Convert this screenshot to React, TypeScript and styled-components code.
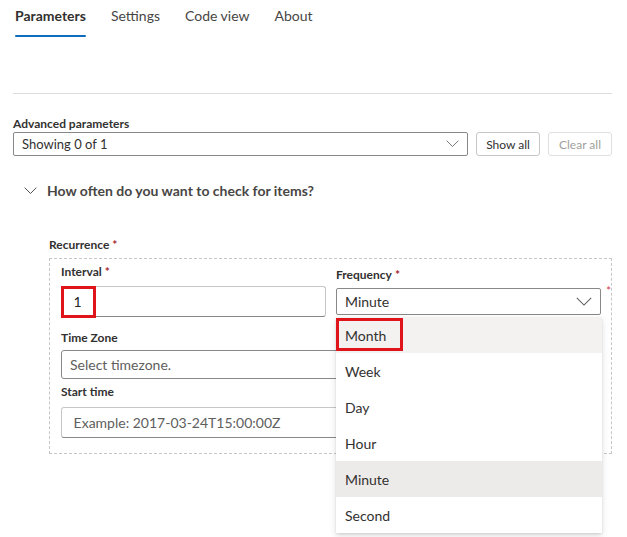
import React from "react";
import styled, { createGlobalStyle } from "styled-components";

const GlobalStyle = createGlobalStyle`
  html, body { margin: 0; padding: 0; background: #fff; }
  body { font-family: "Segoe UI", Lato, "Open Sans", sans-serif; color: #323130; }
  * { box-sizing: border-box; }
`;

const Page = styled.div`
  width: 627px;
  height: 537px;
  padding: 0 15px 0 13px;
  position: relative;
  overflow: hidden;
`;

const TabBar = styled.div`
  display: flex;
  gap: 25px;
  padding-left: 2px;
  height: 40px;
`;

const Tab = styled.div<{ $active?: boolean }>`
  position: relative;
  font-size: 14px;
  line-height: 20px;
  padding-top: 6px;
  font-weight: ${(p) => (p.$active ? 700 : 400)};
  color: ${(p) => (p.$active ? "#323130" : "#484644")};
  &::after {
    content: "";
    display: ${(p) => (p.$active ? "block" : "none")};
    position: absolute;
    left: 0;
    right: 0;
    top: 35px;
    height: 2px;
    border-radius: 1px;
    background: #0f6cbd;
  }
`;

const Divider = styled.div`
  margin-top: 53px;
  height: 1px;
  background: #dcdcdc;
`;

const FieldLabel = styled.div`
  font-size: 12px;
  font-weight: 700;
  line-height: 16px;
  height: 16px;
  color: #323130;
`;

const Star = styled.span`
  color: #a4262c;
  margin-left: 3px;
`;

const AdvLabel = styled(FieldLabel)`
  margin-top: 22px;
`;

const AdvRow = styled.div`
  display: flex;
  align-items: center;
  margin-top: 0px;
  gap: 8px;
`;

const AdvSelect = styled.div`
  flex: 0 0 455px;
  height: 24px;
  border: 1px solid #8a8886;
  border-radius: 2px;
  display: flex;
  align-items: center;
  justify-content: space-between;
  padding: 0 8px 0 8px;
  font-size: 13px;
  color: #323130;
`;

const SmallButton = styled.div<{ $disabled?: boolean }>`
  height: 24px;
  min-width: 64px;
  padding: 0 8px;
  border: 1px solid ${(p) => (p.$disabled ? "#e1dfdd" : "#c8c6c4")};
  border-radius: 3px;
  font-size: 12px;
  white-space: nowrap;
  display: flex;
  align-items: center;
  justify-content: center;
  color: ${(p) => (p.$disabled ? "#a19f9d" : "#323130")};
`;

const SectionHeader = styled.div`
  display: flex;
  align-items: center;
  gap: 10px;
  margin-top: 25px;
  padding-left: 11px;
  font-size: 14px;
  font-weight: 700;
  line-height: 20px;
  color: #484644;
  height: 20px;
`;

const RecurrenceLabel = styled(FieldLabel)`
  margin-top: 36px;
  margin-left: 36px;
`;

const DashedBox = styled.div`
  margin-top: 5px;
  margin-left: 36px;
  width: 563px;
  height: 196px;
  border: 1px dashed #c8c6c4;
  padding: 5px 0 0 11px;
  position: relative;
`;

const TopRow = styled.div`
  display: flex;
  gap: 10px;
`;

const Column = styled.div<{ $offset?: number }>`
  width: 265px;
  padding-top: ${(p) => p.$offset ?? 0}px;
  position: relative;
`;

const Input = styled.div<{ $h: number; $mt: number; $border: string; $placeholder?: boolean }>`
  height: ${(p) => p.$h}px;
  margin-top: ${(p) => p.$mt}px;
  border: 1px solid ${(p) => p.$border};
  border-bottom-color: #8a8886;
  border-radius: 3px;
  display: flex;
  align-items: center;
  padding: 0 12px 0 8px;
  font-size: 14px;
  color: ${(p) => (p.$placeholder ? "#605e5c" : "#242424")};
  position: relative;
`;

const SelectBox = styled.div`
  height: 27px;
  margin-top: 5px;
  border: 1px solid #8a8886;
  border-radius: 2px;
  display: flex;
  align-items: center;
  justify-content: space-between;
  padding: 0 8px 0 8px;
  font-size: 14px;
  color: #323130;
`;

const SideStar = styled.span`
  position: absolute;
  right: -10px;
  top: 20px;
  color: #d13438;
  font-size: 11px;
`;

const FullInput = styled(Input)`
  width: 541px;
`;

const LabelSpaced = styled(FieldLabel)<{ $mt: number }>`
  margin-top: ${(p) => p.$mt}px;
`;

const Highlight = styled.div<{ $w: number; $h: number; $l: number; $t: number }>`
  position: absolute;
  left: ${(p) => p.$l}px;
  top: ${(p) => p.$t}px;
  width: ${(p) => p.$w}px;
  height: ${(p) => p.$h}px;
  border: 3px solid #e0141b;
  pointer-events: none;
`;

const Menu = styled.div`
  position: absolute;
  left: 0;
  top: 53px;
  width: 266px;
  background: #fff;
  box-shadow: 0 3px 7px rgba(0, 0, 0, 0.13), 0 0.6px 2px rgba(0, 0, 0, 0.1);
  z-index: 10;
`;

const MenuItem = styled.div<{ $bg?: string }>`
  height: 36px;
  display: flex;
  align-items: center;
  padding-left: 9px;
  font-size: 14px;
  color: #323130;
  background: ${(p) => p.$bg ?? "#fff"};
  position: relative;
`;

const Chevron = ({ size = 12, color = "#605e5c" }: { size?: number; color?: string }) => (
  <svg width={size} height={size * 0.55} viewBox="0 0 20 11" fill="none">
    <path d="M1 1 L10 10 L19 1" stroke={color} strokeWidth="1.3" />
  </svg>
);

const items = [
  { t: "Month", bg: "#f3f2f1", box: true },
  { t: "Week" },
  { t: "Day" },
  { t: "Hour" },
  { t: "Minute", bg: "#edebe9" },
  { t: "Second" },
];

export default function App() {
  return (
    <Page>
      <GlobalStyle />
      <TabBar>
        <Tab $active>Parameters</Tab>
        <Tab>Settings</Tab>
        <Tab>Code view</Tab>
        <Tab>About</Tab>
      </TabBar>
      <Divider />
      <AdvLabel>Advanced parameters</AdvLabel>
      <AdvRow>
        <AdvSelect>
          <span>Showing 0 of 1</span>
          <Chevron size={13} />
        </AdvSelect>
        <SmallButton>Show all</SmallButton>
        <SmallButton $disabled>Clear all</SmallButton>
      </AdvRow>
      <SectionHeader>
        <Chevron size={13} color="#323130" />
        <span>How often do you want to check for items?</span>
      </SectionHeader>
      <RecurrenceLabel>
        Recurrence<Star>*</Star>
      </RecurrenceLabel>
      <DashedBox>
        <TopRow>
          <Column>
            <FieldLabel>
              Interval<Star>*</Star>
            </FieldLabel>
            <Input $h={31} $mt={6} $border="#c8c6c4">
              &nbsp;1
              <Highlight $l={-1} $t={-1} $w={35} $h={32} />
            </Input>
          </Column>
          <Column $offset={3}>
            <FieldLabel>
              Frequency<Star>*</Star>
            </FieldLabel>
            <SelectBox>
              <span>Minute</span>
              <Chevron size={16} color="#605e5c" />
            </SelectBox>
            <SideStar>*</SideStar>
            <Menu>
              {items.map((it) => (
                <MenuItem key={it.t} $bg={it.bg}>
                  {it.t}
                  {it.box && <Highlight $l={0} $t={1} $w={67} $h={33} />}
                </MenuItem>
              ))}
            </Menu>
          </Column>
        </TopRow>
        <LabelSpaced $mt={13}>Time Zone</LabelSpaced>
        <FullInput $h={29} $mt={4} $border="#8a8886" $placeholder>
          Select timezone.
        </FullInput>
        <LabelSpaced $mt={5}>Start time</LabelSpaced>
        <FullInput $h={31} $mt={7} $border="#c8c6c4" $placeholder>
          &nbsp;Example: 2017-03-24T15:00:00Z
        </FullInput>
      </DashedBox>
    </Page>
  );
}
